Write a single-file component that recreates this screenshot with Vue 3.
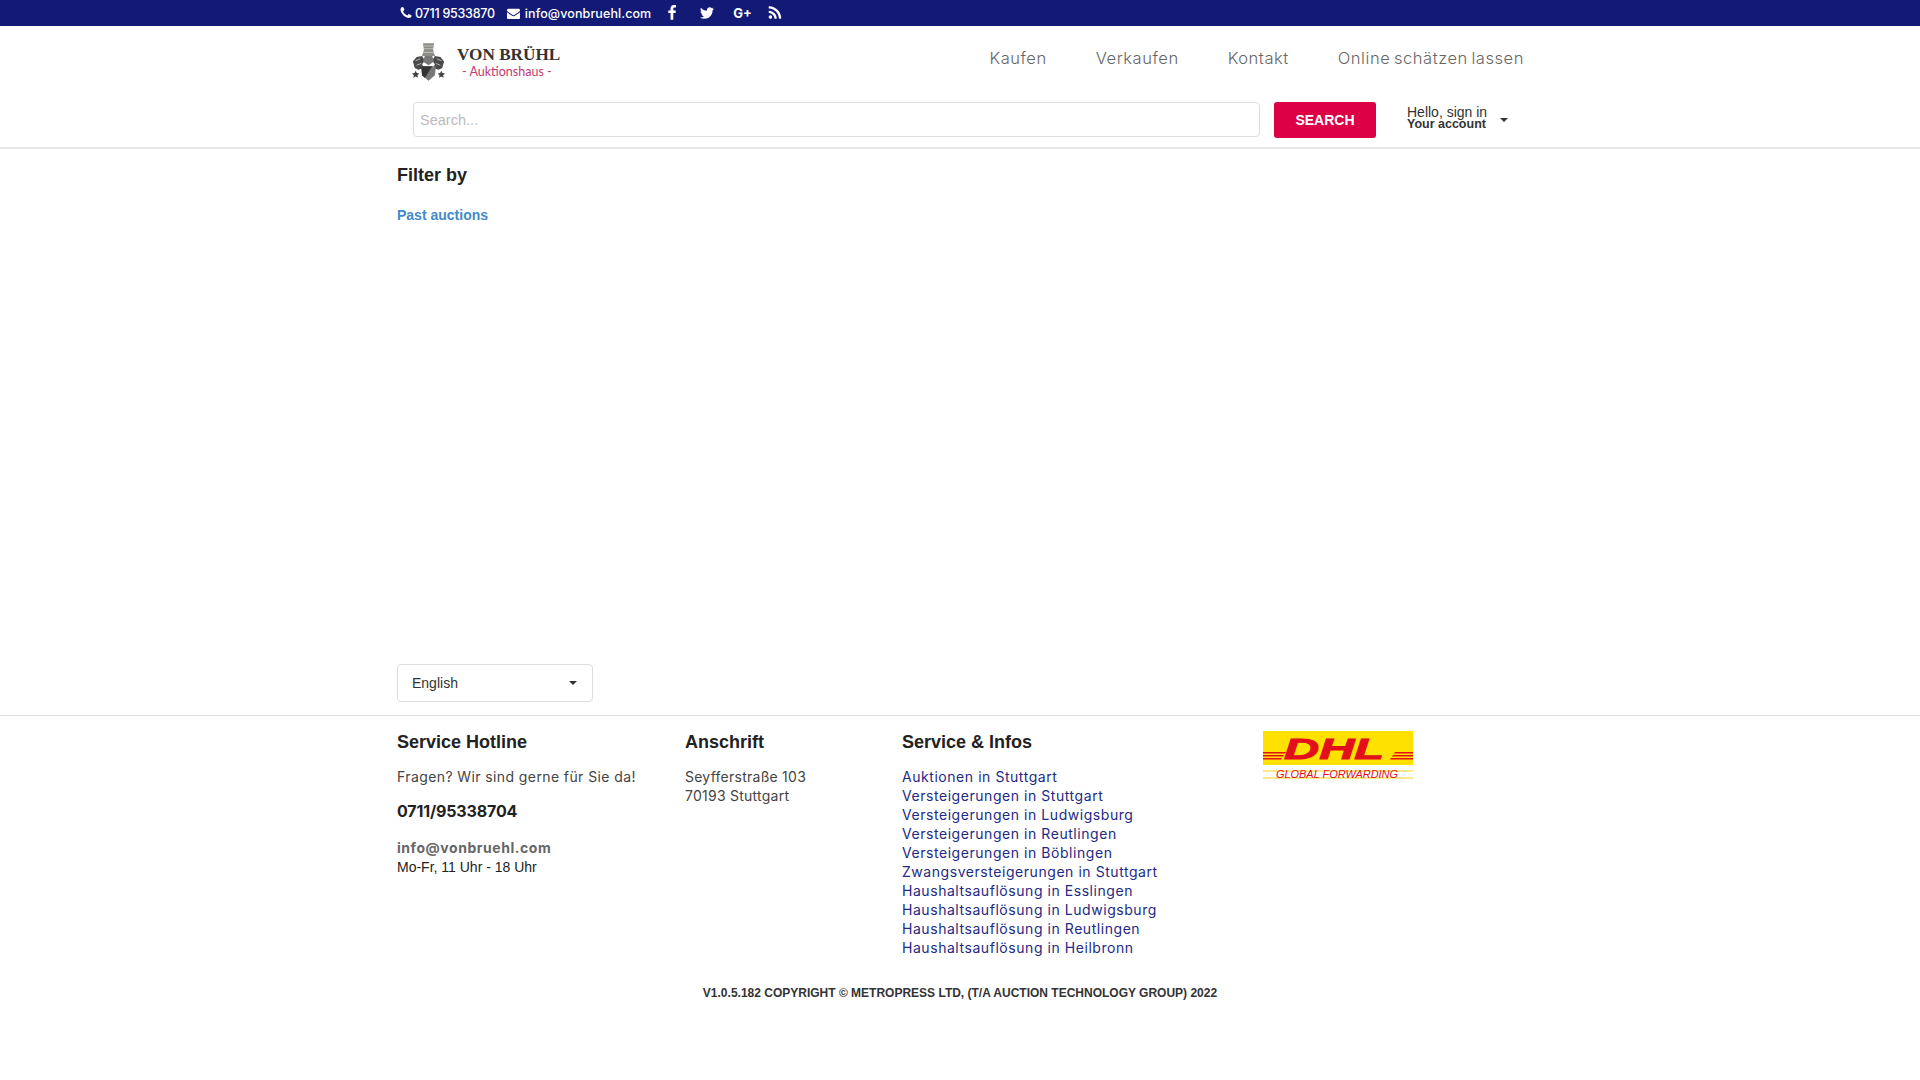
<template>
  <div class="page">
    <div class="topbar">
      <div class="wrap topbar-inner">
        <span class="top-item phone">
          <svg class="ico" viewBox="0 0 1792 1792"><path fill="currentColor" :d="icons.phone"/></svg>
          <span>0711 9533870</span>
        </span>
        <span class="top-item mail">
          <svg class="ico" viewBox="0 0 1792 1792"><path fill="currentColor" :d="icons.envelope"/></svg>
          <span>info@vonbruehl.com</span>
        </span>
        <a class="social fb"><svg class="ico" viewBox="0 0 1792 1792"><path fill="currentColor" :d="icons.facebook"/></svg></a>
        <a class="social tw"><svg class="ico" viewBox="0 0 1792 1792"><path fill="currentColor" :d="icons.twitter"/></svg></a>
        <a class="social gp">G+</a>
        <a class="social rs"><svg class="ico" viewBox="0 0 1792 1792"><path fill="currentColor" :d="icons.rss"/></svg></a>
      </div>
    </div>

    <header class="header">
      <div class="wrap">
        <div class="head-row">
          <div class="logo">
            <svg class="crest" width="33" height="41" viewBox="0 0 36 42">
              <path d="M12 0h12l-1 7 2 7H11l2-7z" fill="#8d8d88"/>
              <path d="M13 3h10M13 6h10M12 10h12" stroke="#c4c4c0" stroke-width="1"/>
              <path d="M1 20l4-5 6-1 3 5-3 4 2 4-6 2-4-2z" fill="#4a4a4a"/>
              <path d="M35 20l-4-5-6-1-3 5 3 4-2 4 6 2 4-2z" fill="#4a4a4a"/>
              <path d="M4 19l5-2M5 24l5-2M32 19l-5-2M31 24l-5-2" stroke="#bbb" stroke-width="1"/>
              <path d="M14 14h8l2 6-6 4-6-4z" fill="#777"/>
              <path d="M10 25h16l-1 10-7 6-7-6z" fill="#777"/>
              <path d="M10 25h12l-8 13-3-3z" fill="#333"/>
              <path d="M4 30l1.200 2.500 2.800.4-2 2 .5 2.800L4 36.400 1.500 37.700 2 34.900l-2-2 2.800-.4zM32 30l1.200 2.500 2.800.4-2 2 .5 2.800-2.500-1.300-2.500 1.300.5-2.800-2-2 2.800-.4z" fill="#444"/>
            </svg>
            <div class="logo-text">
              <div class="logo-name">VON BRÜHL</div>
              <div class="logo-sub">- Auktionshaus -</div>
            </div>
          </div>
          <nav class="nav">
            <a v-for="item in navItems" :key="item">{{ item }}</a>
          </nav>
        </div>
        <div class="search-row">
          <input class="search" type="text" placeholder="Search..." />
          <button class="search-btn">SEARCH</button>
          <div class="account">
            <div class="account-text">
              <div>Hello, sign in</div>
              <strong>Your account</strong>
            </div>
            <span class="caret"></span>
          </div>
        </div>
      </div>
    </header>

    <main class="wrap main">
      <h3 class="filter-title">Filter by</h3>
      <a class="past">Past auctions</a>
      <div class="lang">
        <span>English</span>
        <span class="caret"></span>
      </div>
    </main>

    <footer class="footer">
      <div class="wrap">
        <div class="foot-grid">
          <div>
            <h4>Service Hotline</h4>
            <p class="mont">Fragen? Wir sind gerne für Sie da!</p>
            <p class="hotline">0711/95338704</p>
            <p class="mont foot-mail">info@vonbruehl.com</p>
            <p class="hours">Mo-Fr, 11 Uhr - 18 Uhr</p>
          </div>
          <div>
            <h4>Anschrift</h4>
            <p class="mont addr">Seyfferstraße 103<br />70193 Stuttgart</p>
          </div>
          <div>
            <h4>Service &amp; Infos</h4>
            <a v-for="link in links" :key="link" class="foot-link">{{ link }}</a>
          </div>
          <div>
            <svg class="dhl" width="150" height="48" viewBox="0 0 150 48">
              <rect width="150" height="34" fill="#ffe100"/>
              <path d="M0 21h23l-1 1.500H0zM0 24h21l-1 1.500H0zM0 27h19l-1 1.500H0zM150 21h-18l-1 1.500h19zM150 24h-20l-1 1.500h21zM150 27h-22l-1 1.500h23z" fill="#e2101c"/>
              <text class="dhl-mark" x="71" y="28" text-anchor="middle" textLength="100" lengthAdjust="spacingAndGlyphs">DHL</text>
              <rect y="39" width="150" height="2" fill="#ffe98a"/>
              <rect y="46" width="150" height="2" fill="#ffe98a"/>
              <text class="dhl-sub" x="74" y="47" text-anchor="middle" textLength="122" lengthAdjust="spacingAndGlyphs">GLOBAL FORWARDING</text>
            </svg>
          </div>
        </div>
        <div class="copyright">V1.0.5.182 COPYRIGHT © METROPRESS LTD, (T/A AUCTION TECHNOLOGY GROUP) 2022</div>
      </div>
    </footer>
  </div>
</template>

<script setup>
const navItems = ['Kaufen', 'Verkaufen', 'Kontakt', 'Online schätzen lassen']

const links = [
  'Auktionen in Stuttgart',
  'Versteigerungen in Stuttgart',
  'Versteigerungen in Ludwigsburg',
  'Versteigerungen in Reutlingen',
  'Versteigerungen in Böblingen',
  'Zwangsversteigerungen in Stuttgart',
  'Haushaltsauflösung in Esslingen',
  'Haushaltsauflösung in Ludwigsburg',
  'Haushaltsauflösung in Reutlingen',
  'Haushaltsauflösung in Heilbronn',
]

const icons = {
  phone: 'M1600 1240q0 27-10 70.5t-21 68.5q-21 50-122 106-94 51-186 51-27 0-53-3.5t-57.5-12.5-47-14.5-55.5-20.5-49-18q-98-35-175-83-127-79-264-216t-216-264q-48-77-83-175-3-9-18-49t-20.5-55.5-14.5-47-12.5-57.5-3.5-53q0-92 51-186 56-101 106-122 25-11 68.5-21t70.5-10q14 0 21 3 18 6 53 76 11 19 30 54t35 63.5 31 53.5q3 4 17.5 25t21.500 35.5 7 28.5q0 20-28.5 50t-62 55-62 53-28.5 46q0 9 5 22.5t8.5 20.5 14 24 11.5 19q76 137 174 235t235 174q2 1 19 11.5t24 14 20.5 8.5 22.5 5q18 0 46-28.5t53-62 55-62 50-28.5q14 0 28.5 7t35.5 21.5 25 17.5q25 15 53.5 31t63.5 35 54 30q70 35 76 53 3 7 3 21z',
  envelope: 'M1792 710v794q0 66-47 113t-113 47h-1472q-66 0-113-47t-47-113v-794q44 49 101 87 362 246 497 345 57 42 92.5 65.5t94.5 48 110 24.5h2q51 0 110-24.5t94.5-48 92.5-65.5q170-123 498-345 57-39 100-87zm0-294q0 79-49 151t-122 123q-376 261-468 325-10 7-42.5 30.5t-54 38-52 32.5-57.5 27-50 9h-2q-23 0-50-9t-57.5-27-52-32.5-54-38-42.5-30.5q-91-64-262-182.5t-205-142.5q-62-42-117-115.5t-55-136.5q0-78 41.5-130t118.5-52h1472q65 0 112.5 47t47.5 113z',
  facebook: 'M1343 12v264h-157q-86 0-116 36t-30 108v189h293l-39 296h-254v759h-306v-759h-255v-296h255v-218q0-186 104-288.5t277-102.5q147 0 228 12z',
  twitter: 'M1684 408q-67 98-162 167 1 14 1 42 0 130-38 259.5t-115.5 248.5-184.5 210.5-258 146-323 54.5q-271 0-496-145 35 4 78 4 225 0 401-138-105-2-188-64.5t-114-159.5q33 5 61 5 43 0 85-11-112-23-185.5-111.5t-73.5-205.5v-4q68 38 146 41-66-44-105-115t-39-154q0-88 44-163 121 149 294.5 238.5t371.5 99.5q-8-38-8-74 0-134 94.5-228.5t228.5-94.5q140 0 236 102 109-21 200-76-35 110-135 169 99-11 176-43z',
  rss: 'M576 1344q0 80-56 136t-136 56-136-56-56-136 56-136 136-56 136 56 56 136zm512 123q2 28-17 48-18 21-47 21h-135q-25 0-43-16.5t-20-41.5q-22-229-184.5-391.5t-391.5-184.5q-25-2-41.5-20t-16.5-43v-135q0-29 21-47 17-17 43-17h5q160 13 306 80.5t259 181.5q114 113 181.5 259t80.5 306zm512 2q2 27-18 47-18 20-46 20h-143q-26 0-44.5-17.5t-19.5-42.5q-12-215-101-408.5t-231.5-336-336-231.5-408.5-102q-25-1-42.5-19.5t-17.5-43.5v-143q0-28 20-46 18-18 44-18h3q262 13 501.5 120t425.5 294q187 186 294 425.5t120 501.5z',
}
</script>

<style>
html, body {
  background: #fff;
}
</style>

<style scoped>
.page {
  font-family: "Liberation Sans", Arial, sans-serif;
  font-size: 14px;
  color: #222;
}

.wrap {
  width: 1126px;
  margin: 0 auto;
}

.topbar {
  height: 26px;
  background: #131a75;
  color: #fff;
}

.topbar-inner {
  display: flex;
  align-items: center;
  height: 26px;
  font-family: Inter, sans-serif;
  font-size: 12.500px;
  font-weight: 500;
}

.top-item {
  display: flex;
  align-items: center;
}

.ico {
  width: 16px;
  height: 16px;
  display: block;
}

.phone {
  margin-left: 2px;
  gap: 2px;
  letter-spacing: -0.25px;
}

.phone .ico {
  width: 14px;
  height: 14px;
}

.mail {
  margin-left: 12px;
  gap: 5px;
  letter-spacing: 0.1px;
}

.mail .ico {
  width: 13px;
  height: 13px;
}

.social {
  display: block;
  color: #fff;
}

.fb { margin-left: 13px; }
.tw { margin-left: 19px; }
.gp { margin-left: 18px; font-size: 13px; font-weight: 700; }
.rs { margin-left: 15px; }

.header {
  height: 121px;
  border-bottom: 2px solid #e9e9e9;
}

.head-row {
  display: flex;
  justify-content: space-between;
  height: 76px;
}

.logo {
  display: flex;
  margin: 16px 0 0 15px;
  height: 41px;
}

.logo-text {
  margin-left: 12px;
}

.logo-name {
  font-family: "Liberation Serif", serif;
  font-size: 17.200px;
  font-weight: 700;
  line-height: 20px;
  margin-top: 3px;
  color: #333;
}

.logo-sub {
  font-family: Lato, sans-serif;
  font-size: 12.500px;
  line-height: 15px;
  margin-left: 5px;
  margin-top: -1px;
  color: #c2396f;
}

.nav {
  display: flex;
  gap: 49px;
  margin-right: -1px;
  padding: 22px 0 0;
  font-family: Inter, sans-serif;
  font-size: 16.500px;
  font-weight: 300;
  letter-spacing: 0.55px;
  word-spacing: -1.500px;
  line-height: 20px;
  color: #666;
}

.search-row {
  display: flex;
  align-items: flex-start;
  padding-left: 16px;
}

.search {
  width: 847px;
  height: 35px;
  box-sizing: border-box;
  border: 1px solid #ddd;
  border-radius: 4px;
  padding: 0 6px;
  font-family: "Liberation Sans", sans-serif;
  font-size: 14.500px;
}

.search::placeholder {
  color: #bbb;
}

.search-btn {
  width: 102px;
  height: 36px;
  margin-left: 14px;
  border: 0;
  border-radius: 3px;
  background: #de0046;
  color: #fff;
  font-family: "Liberation Sans", sans-serif;
  font-size: 14px;
  font-weight: 700;
}

.account {
  display: flex;
  align-items: center;
  height: 32px;
  margin-left: 31px;
  line-height: 12px;
  color: #333;
}

.account strong {
  display: block;
  font-size: 12.500px;
}

.caret {
  display: block;
  width: 0;
  height: 0;
  border-left: 4px solid transparent;
  border-right: 4px solid transparent;
  border-top: 4px solid #333;
}

.account .caret {
  margin: 3px 0 0 13px;
}

.main {
  height: 566px;
}

.filter-title {
  margin: 0;
  padding-top: 16px;
  font-size: 18px;
  line-height: 20px;
  font-weight: 700;
}

.past {
  display: block;
  margin-top: 20px;
  font-weight: 700;
  line-height: 20px;
  color: #428bca;
}

.lang {
  display: flex;
  align-items: center;
  justify-content: space-between;
  box-sizing: border-box;
  width: 196px;
  height: 38px;
  margin-top: 439px;
  padding: 0 15px 0 14px;
  border: 1px solid #ddd;
  border-radius: 4px;
  color: #333;
}

.footer {
  border-top: 1px solid #ddd;
  height: 300px;
}

.foot-grid {
  display: grid;
  grid-template-columns: 288px 217px 361px 1fr;
  padding-top: 16px;
}

.foot-grid h4 {
  margin: 0 0 15px;
  font-size: 18px;
  line-height: 20px;
  font-weight: 700;
}

.foot-grid p {
  margin: 0;
}

.mont {
  font-family: Inter, sans-serif;
  font-size: 14px;
  letter-spacing: 0.4px;
  line-height: 19px;
  color: #444;
}

.addr {
  letter-spacing: 0.25px;
}

.hotline {
  margin-top: 15px !important;
  font-family: Inter, sans-serif;
  font-size: 16px;
  font-weight: 700;
  letter-spacing: -0.15px;
  line-height: 20px;
}

.foot-mail {
  margin-top: 17px !important;
  font-weight: 700;
  letter-spacing: 0.55px;
  color: #666;
}

.hours {
  line-height: 20px;
}

.foot-link {
  display: block;
  font-family: Inter, sans-serif;
  font-size: 14px;
  letter-spacing: 0.55px;
  line-height: 19px;
  color: #232a85;
}

.dhl {
  display: block;
  margin-top: -1px;
}

.dhl-mark {
  font-family: "Liberation Sans", sans-serif;
  font-size: 30px;
  font-weight: 700;
  font-style: italic;
  fill: #e2101c;
  stroke: #e2101c;
  stroke-width: 1px;
}

.dhl-sub {
  font-family: "Liberation Sans", sans-serif;
  font-size: 11px;
  font-style: italic;
  fill: #e2101c;
}

.copyright {
  margin-top: 29px;
  text-align: center;
  font-size: 12px;
  font-weight: 700;
  line-height: 14px;
  color: #333;
}
</style>
